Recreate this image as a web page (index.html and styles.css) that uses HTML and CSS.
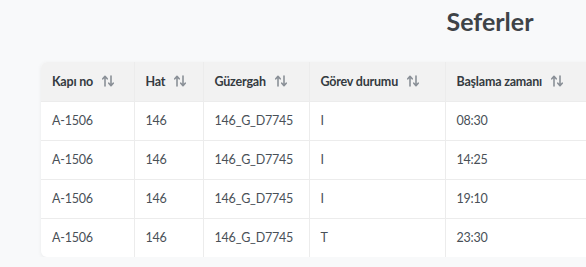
FILE: index.html
```html
<!DOCTYPE html>
<html lang="tr">
<head>
<meta charset="utf-8">
<link rel="stylesheet" href="styles.css">
</head>
<body>
<div class="page">
  <h1 class="title">Seferler</h1>
  <div class="card">
    <table class="grid">
      <colgroup>
        <col class="c1"><col class="c2"><col class="c3"><col class="c4"><col class="c5">
      </colgroup>
      <thead>
        <tr>
          <th><span class="th">Kapı no <svg class="sort" viewBox="0 0 12 12"><path d="M3 11V1.5M0.8 3.8L3 1.3L5.2 3.8M9 1v9.5M6.8 8.2L9 10.7L11.2 8.2"/></svg></span></th>
          <th><span class="th">Hat <svg class="sort" viewBox="0 0 12 12"><path d="M3 11V1.5M0.8 3.8L3 1.3L5.2 3.8M9 1v9.5M6.8 8.2L9 10.7L11.2 8.2"/></svg></span></th>
          <th><span class="th">Güzergah <svg class="sort" viewBox="0 0 12 12"><path d="M3 11V1.5M0.8 3.8L3 1.3L5.2 3.8M9 1v9.5M6.8 8.2L9 10.7L11.2 8.2"/></svg></span></th>
          <th><span class="th">Görev durumu <svg class="sort" viewBox="0 0 12 12"><path d="M3 11V1.5M0.8 3.8L3 1.3L5.2 3.8M9 1v9.5M6.8 8.2L9 10.7L11.2 8.2"/></svg></span></th>
          <th><span class="th">Başlama zamanı <svg class="sort" viewBox="0 0 12 12"><path d="M3 11V1.5M0.8 3.8L3 1.3L5.2 3.8M9 1v9.5M6.8 8.2L9 10.7L11.2 8.2"/></svg></span></th>
        </tr>
      </thead>
      <tbody>
        <tr><td>A-1506</td><td>146</td><td>146_G_D7745</td><td>I</td><td>08:30</td></tr>
        <tr><td>A-1506</td><td>146</td><td>146_G_D7745</td><td>I</td><td>14:25</td></tr>
        <tr><td>A-1506</td><td>146</td><td>146_G_D7745</td><td>I</td><td>19:10</td></tr>
        <tr><td>A-1506</td><td>146</td><td>146_G_D7745</td><td>T</td><td>23:30</td></tr>
      </tbody>
    </table>
  </div>
</div>
</body>
</html>
```
FILE: styles.css
```css
html, body {
  margin: 0;
  padding: 0;
  overflow: hidden;
  background: #f8f9fa;
}
body {
  font-family: "Lato", "Open Sans", sans-serif;
  color: #495057;
}
.page {
  width: 980px;
  padding-top: 8px;
}
.title {
  margin: 0 0 27px;
  text-align: center;
  font-size: 25px;
  line-height: 27px;
  font-weight: 700;
  color: #3e4347;
}
.card {
  margin-left: 41px;
  width: 898px;
  background: #ffffff;
  border-radius: 6px;
  box-shadow: 0 1px 4px rgba(0, 0, 0, 0.06);
  overflow: hidden;
}
.grid {
  width: 100%;
  border-collapse: collapse;
  table-layout: fixed;
  font-size: 12.5px;
  letter-spacing: -0.2px;
}
.c1 { width: 93px; }
.c2 { width: 69px; }
.c3 { width: 106px; }
.c4 { width: 136px; }
.grid th, .grid td {
  height: 39px;
  padding: 0 11px;
  text-align: left;
  border-bottom: 1px solid #ececec;
  border-right: 1px solid #ececec;
  white-space: nowrap;
  box-sizing: border-box;
}
.grid tbody tr:last-child td {
  border-bottom: none;
}
.grid th {
  background: #f2f2f2;
  font-weight: 700;
  color: #343a40;
}
.grid td {
  color: #495057;
}
.th {
  display: inline-flex;
  align-items: center;
  gap: 9px;
}
.sort {
  width: 12px;
  height: 12px;
  fill: none;
  stroke: #8a9097;
  stroke-width: 1.6;
  stroke-linecap: round;
  stroke-linejoin: round;
}
```
